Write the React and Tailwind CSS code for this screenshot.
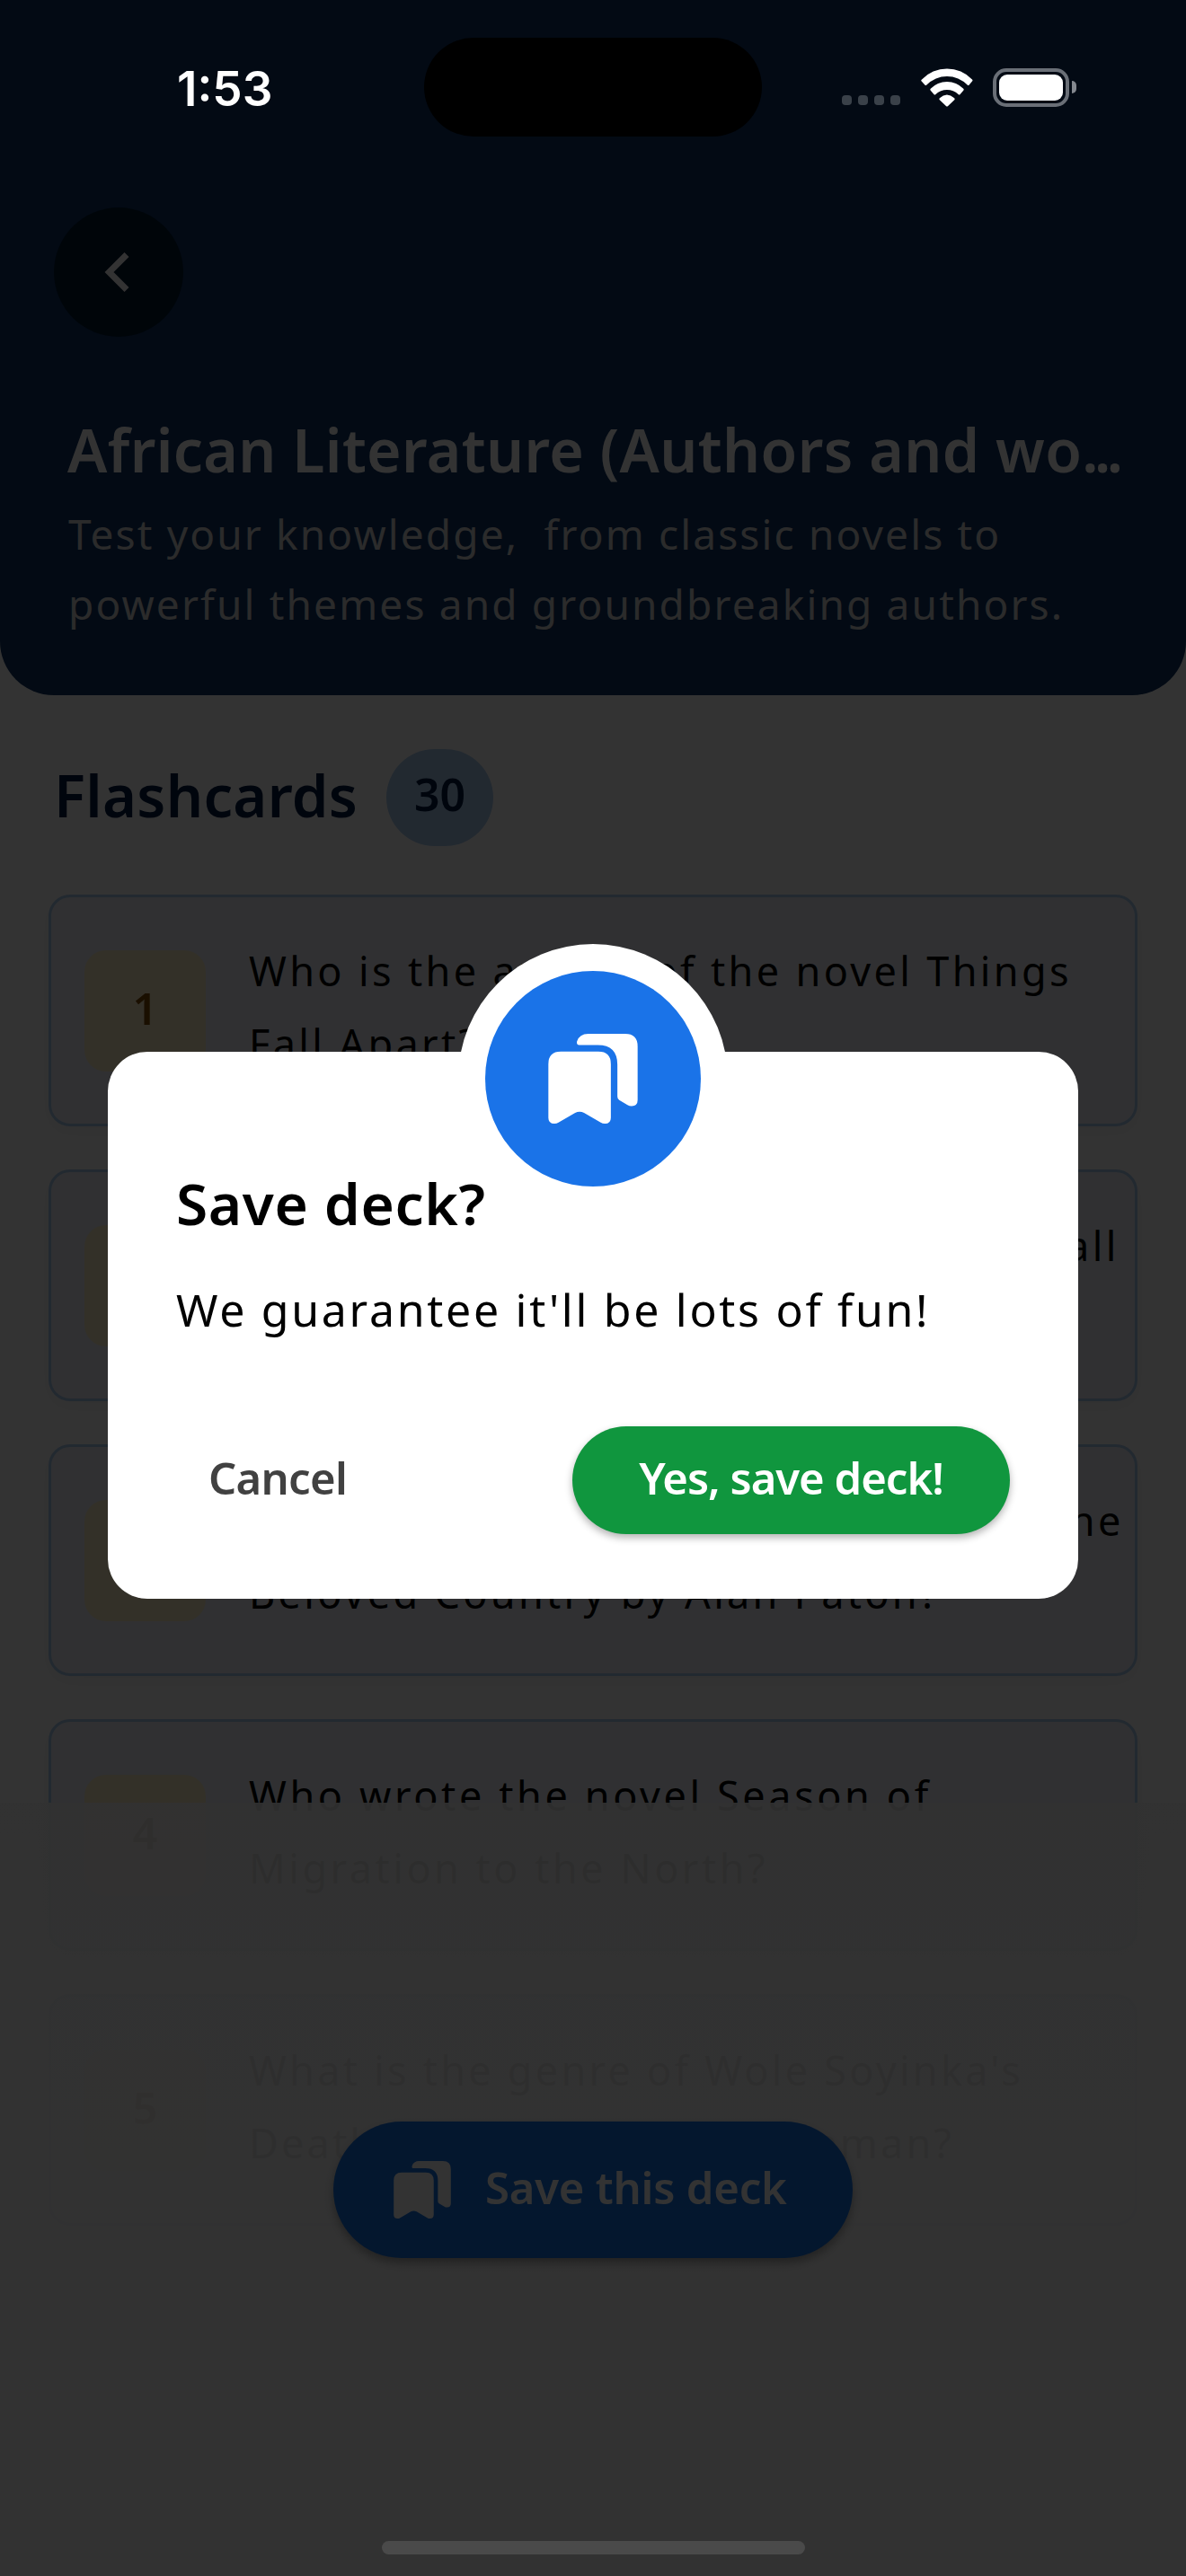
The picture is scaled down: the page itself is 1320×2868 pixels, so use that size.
const cards = [
  { n: 1, lines: [["Who is the author of the novel Things", "tracking-[3.35px]"], ["Fall Apart?", "tracking-[3.35px]"]] },
  { n: 2, lines: [["What is the central theme in Things Fall", "tracking-[3.45px]"], ["Apart?", "tracking-[3.4px]"]] },
  { n: 3, lines: [["What was the central conflict in Cry, the", "tracking-[3.45px]"], ["Beloved Country by Alan Paton?", "tracking-[3.3px]"]] },
  { n: 4, lines: [["Who wrote the novel Season of", "tracking-[3.6px]"], ["Migration to the North?", "tracking-[3.5px]"]] },
  { n: 5, lines: [["What is the genre of Wole Soyinka's", "tracking-[3.25px]"], ["Death and the King's Horseman?", "tracking-[3.15px]"]] },
];

function Bookmarks({ className }) {
  return (
    <svg viewBox="390 363 300 302" className={className} fill="currentColor">
      <path d="M390 465q0-42 42-42h126q42 0 42 42v180q0 20-20 20q-8 0-14-4L510 629q-15-8-30 0L424 661q-6 4-14 4q-20 0-20-20z" />
      <path d="M494 401q-10 0-8-12q8-26 38-26h124q42 0 42 42v181q0 20-20 20q-8 0-14-4L628 586q-6-4-6-12V467q0-66-66-66z" />
    </svg>
  );
}

function StatusBar() {
  return (
    <div className="absolute inset-x-0 top-0 flex h-[194px] items-center text-white">
      <span className="ml-[197px] w-[275px] pt-1 font-[Inter,sans-serif] text-[53px] leading-[60px] font-semibold">1:53</span>
      <div className="h-[110px] w-[376px] rounded-full bg-black" />
      <div className="ml-[89px] flex gap-[7px] pt-[29px]">
        {[0, 1, 2, 3].map((i) => (
          <span key={i} className="size-[11px] rounded-[4px] bg-[#3a4149]" />
        ))}
      </div>
      <svg viewBox="374 74 173 128" className="ml-[23px] h-[43px] w-[58px]" fill="currentColor">
        <path d="M377 111A115 115 0 0 1 544 111q3 3 0 6L534 129q-3 3-6 0A94 94 0 0 0 393 129q-3 3-6 0L376 117q-3-3 1-6z" />
        <path d="M406 142A75 75 0 0 1 515 142q3 3 0 6L504 160q-3 3-6 0A55 55 0 0 0 423 160q-3 3-6 0L406 148q-3-3 0-6z" />
        <path d="M436 173Q460 151 485 173q3 3 0 6L463 200q-3 2-5 0L436 179q-3-3 0-6z" />
      </svg>
      <div className="ml-[22px] h-[43px] w-[85px] rounded-[15px] border-4 border-[#6a6f77] p-[3px]">
        <div className="h-full rounded-[9px] bg-white" />
      </div>
      <span className="ml-[3px] h-[14px] w-[5px] rounded-r-full bg-[#84888f]" />
    </div>
  );
}

function Card({ n, lines }) {
  return (
    <div className="flex h-[258px] items-center gap-12 rounded-3xl border-[3px] border-[#aacbf0] bg-[#edf1f8] pl-[37px] shadow-[0_6px_18px_rgba(0,0,0,0.05)]">
      <div className="flex size-[135px] shrink-0 items-center justify-center rounded-3xl bg-[#ffedc8] pb-[6px] text-[49px] leading-none font-semibold text-[#804b00]">
        {n}
      </div>
      <div className="pb-2 text-[45px] leading-[81px] whitespace-nowrap text-black">
        {lines.map(([text, tracking]) => (
          <p key={text} className={tracking}>{text}</p>
        ))}
      </div>
    </div>
  );
}

export default function App() {
  return (
    <div className="relative h-[2868px] w-[1320px] overflow-hidden bg-white font-['Noto_Sans',sans-serif]">
      <header className="h-[774px] rounded-b-[60px] bg-[#0f3264] px-[60px] pt-[231px]">
        <div className="flex size-36 items-center justify-center rounded-full bg-[#021a30]">
          <svg viewBox="0 0 28 44" className="mr-1 h-[44px] w-[28px]" fill="none" stroke="white" strokeWidth="7">
            <path d="M25 2.500 5.500 22 25 41.500" />
          </svg>
        </div>
        <h1 className="mt-[80px] pl-[15px] text-[66px] leading-[90px] font-semibold tracking-[0.4px] whitespace-nowrap text-white">
          African Literature (Authors and wo<span className="tracking-[-4.5px]">...</span>
        </h1>
        <div className="mt-[10px] pl-[16px] text-[46px] leading-[78px] tracking-[2.15px] whitespace-pre text-[#d4d4d4]">
          <p>{"Test your knowledge,  from classic novels to"}</p>
          <p>powerful themes and groundbreaking authors.</p>
        </div>
      </header>

      <div className="mt-[60px] flex h-[108px] items-center gap-8 pl-[60px] text-[#001a40]">
        <h2 className="w-[338px] pb-1 text-[65px] font-semibold tracking-[0.3px]">Flashcards</h2>
        <span className="flex h-[108px] w-[119px] items-center justify-center rounded-full bg-[#aacbf0] pb-[7px] text-[50px] font-semibold">30</span>
      </div>

      <div className="mt-[54px] flex flex-col gap-12 px-[54px]">
        {cards.map((c) => (
          <Card key={c.n} {...c} />
        ))}
      </div>

      {/* Footer action over the faded end of the list */}
      <div className="absolute inset-x-0 bottom-0 flex h-[861px] flex-col items-center bg-[linear-gradient(rgba(246,246,246,0.9),rgba(247,247,247,0.93)_240px,rgba(250,250,250,0.94))] pt-[355px]">
        <button className="flex h-[152px] w-[578px] items-center rounded-full bg-[#1773e6] pl-[67px] text-white shadow-[0_6px_10px_rgba(0,0,0,0.3)]">
          <Bookmarks className="size-16" />
          <span className="ml-[38px] pb-[5px] text-[49px] font-semibold tracking-[-0.2px] whitespace-nowrap">Save this deck</span>
        </button>
      </div>

      <div className="absolute inset-0 bg-black/80 pt-[1171px]">
        <div className="relative mx-auto h-[609px] w-[1080px] rounded-[44px] bg-white px-[76px] pt-[124px]">
          <div className="absolute -top-[120px] left-[390px] flex size-[300px] items-center justify-center rounded-full bg-white">
            <div className="flex size-[240px] items-center justify-center rounded-full bg-[#1a73e8] text-white">
              <Bookmarks className="size-[100px]" />
            </div>
          </div>
          <h3 className="relative text-[64px] leading-[90px] font-semibold tracking-[0.6px] text-black">Save deck?</h3>
          <p className="mt-[33px] text-[50px] leading-[80px] tracking-[2.7px] text-black">We guarantee it'll be lots of fun!</p>
          <div className="mt-[90px] flex h-[120px] items-center justify-between">
            <button className="pb-[5px] pl-[36px] text-[49px] font-semibold tracking-[-0.7px] text-[#414141]">Cancel</button>
            <button className="flex h-[120px] w-[487px] items-center justify-center rounded-full bg-[#10963e] pb-[5px] text-[49px] font-semibold tracking-[-1px] whitespace-nowrap text-white shadow-[0_4px_8px_rgba(0,0,0,0.3)]">Yes, save deck!</button>
          </div>
        </div>
      </div>

      <StatusBar />
      <div className="absolute inset-x-0 bottom-[24px] flex justify-center">
        <div className="h-[15px] w-[471px] rounded-full bg-[#4a4a4a]" />
      </div>
    </div>
  );
}
